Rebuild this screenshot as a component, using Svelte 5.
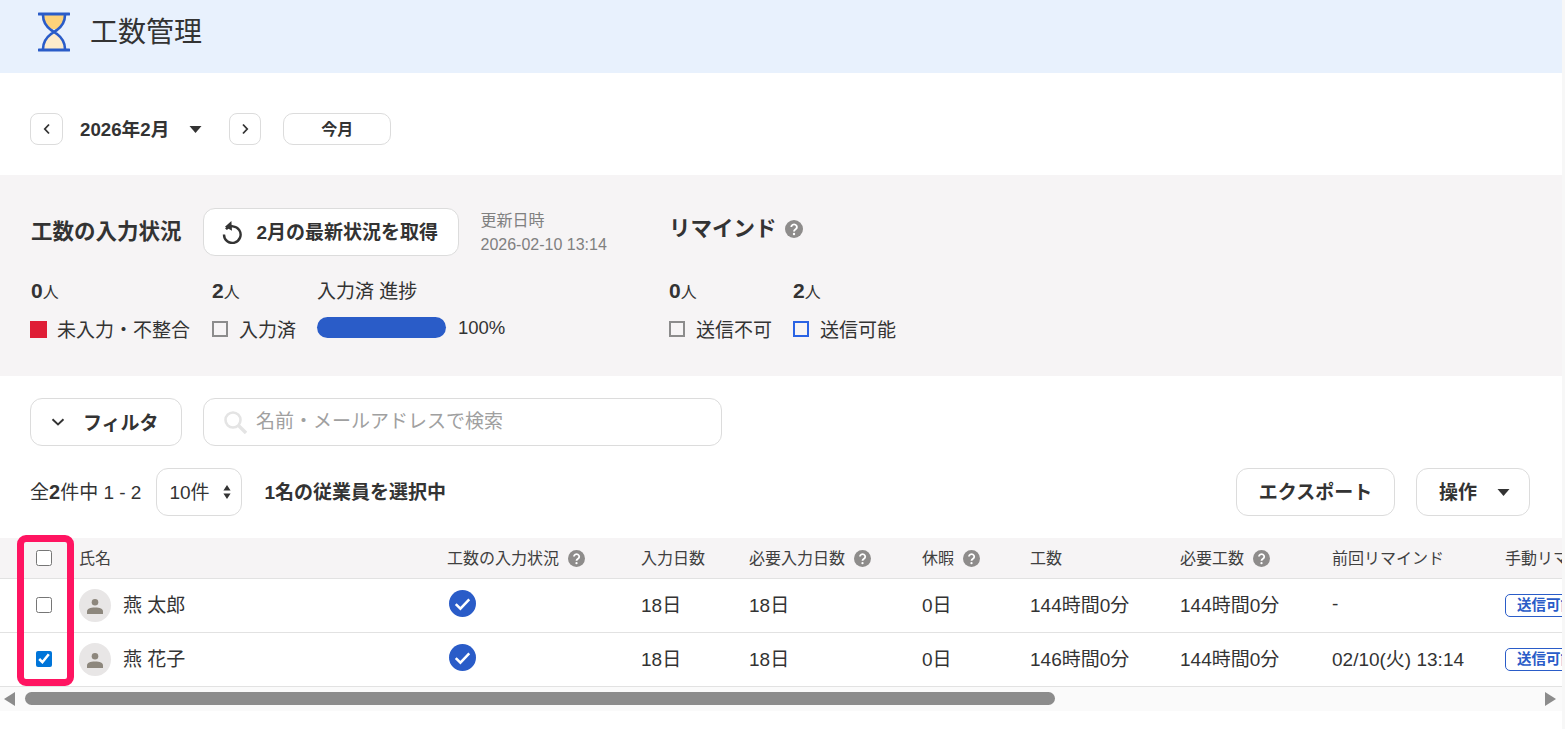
<script>
	const columns = [
		{ label: '工数の入力状況', help: true },
		{ label: '入力日数' },
		{ label: '必要入力日数', help: true },
		{ label: '休暇', help: true },
		{ label: '工数' },
		{ label: '必要工数', help: true },
		{ label: '前回リマインド' },
		{ label: '手動リマインド' }
	];

	const rows = [
		{ name: '燕 太郎', days: '18日', required: '18日', leave: '0日', hours: '144時間0分', requiredHours: '144時間0分', last: '-', checked: false },
		{ name: '燕 花子', days: '18日', required: '18日', leave: '0日', hours: '146時間0分', requiredHours: '144時間0分', last: '02/10(火) 13:14', checked: true }
	];
</script>

{#snippet help()}
	<svg class="help" viewBox="0 0 18 18" aria-hidden="true">
		<circle cx="9" cy="9" r="9" fill="#8e8c8b" />
		<path d="M6.3 7a2.8 2.6 0 1 1 4.3 2.2c-1 .7-1.6 1.1-1.6 2.2" fill="none" stroke="#fff" stroke-width="1.9" />
		<circle cx="9" cy="14" r="1.2" fill="#fff" />
	</svg>
{/snippet}

{#snippet caret()}
	<svg class="caret" viewBox="0 0 12 7" aria-hidden="true"><path d="M0 0h12L6 7z" fill="#333" /></svg>
{/snippet}

<div class="page">
	<header class="top">
		<svg class="logo" viewBox="0 0 32 40" aria-hidden="true">
			<path d="M5 3h22c0 7-3 11-8 14H13C8 14 5 10 5 3z" fill="#fdd27a" />
			<path d="M16 21c-5 3-10 8-10 16h20c0-8-5-13-10-16z" fill="#fdeccb" />
			<path d="M1 2h30M1 38h30" stroke="#2a5cc8" stroke-width="3" stroke-linecap="round" fill="none" />
			<path d="M5 3c0 8 4 12 8 15 2 1 4 3 6 4 4 3 8 7 8 15M27 3c0 8-4 12-8 15-2 1-4 3-6 4-4 3-8 7-8 15" stroke="#2a5cc8" stroke-width="2.6" fill="none" />
		</svg>
		<h1>工数管理</h1>
	</header>

	<div class="month">
		<button class="icon-btn" aria-label="前月">
			<svg viewBox="0 0 8 12"><path d="M6 1.5 1.8 6 6 10.5" fill="none" stroke="#333" stroke-width="1.8" /></svg>
		</button>
		<strong class="current">2026年2月</strong>
		{@render caret()}
		<button class="icon-btn next" aria-label="翌月">
			<svg viewBox="0 0 8 12"><path d="M2 1.5 6.2 6 2 10.5" fill="none" stroke="#333" stroke-width="1.8" /></svg>
		</button>
		<button class="today">今月</button>
	</div>

	<section class="status">
		<div class="left">
			<div class="title-row">
				<h2>工数の入力状況</h2>
				<button class="refresh">
					<svg viewBox="0 0 24 24" aria-hidden="true">
						<path d="M7 9.2A8.3 8.3 0 1 1 5 14.5" fill="none" stroke="#333" stroke-width="2.4" />
						<path d="M12.4 1 6 6.8l7 4z" fill="#333" />
					</svg>
					2月の最新状況を取得
				</button>
				<div class="updated">
					<div>更新日時</div>
					<div>2026-02-10 13:14</div>
				</div>
			</div>
			<div class="stats">
				<div class="stat s1">
					<div class="count"><b>0</b>人</div>
					<div class="legend"><i class="mark red"></i>未入力・不整合</div>
				</div>
				<div class="stat s2">
					<div class="count"><b>2</b>人</div>
					<div class="legend"><i class="mark grey"></i>入力済</div>
				</div>
				<div class="stat">
					<div class="count plain">入力済 進捗</div>
					<div class="legend">
						<span class="bar"></span>
						<span class="pct">100%</span>
					</div>
				</div>
			</div>
		</div>
		<div class="right">
			<div class="title-row">
				<h2>リマインド</h2>
				{@render help()}
			</div>
			<div class="stats">
				<div class="stat s3">
					<div class="count"><b>0</b>人</div>
					<div class="legend"><i class="mark grey"></i>送信不可</div>
				</div>
				<div class="stat">
					<div class="count"><b>2</b>人</div>
					<div class="legend"><i class="mark blue"></i>送信可能</div>
				</div>
			</div>
		</div>
	</section>

	<div class="filter-row">
		<button class="filter">
			<svg viewBox="0 0 14 8" aria-hidden="true"><path d="M1.5 1.2 7 6.4l5.5-5.2" fill="none" stroke="#333" stroke-width="1.9" /></svg>
			フィルタ
		</button>
		<label class="search">
			<svg viewBox="0 0 24 24" aria-hidden="true">
				<circle cx="10" cy="10" r="7.5" fill="none" stroke="#e4e4e4" stroke-width="2.6" />
				<path d="M15.5 15.5 23 23" stroke="#e4e4e4" stroke-width="3.4" />
			</svg>
			<input type="text" placeholder="名前・メールアドレスで検索" />
		</label>
	</div>

	<div class="list-row">
		<span class="total">全<b>2</b>件中 1 - 2</span>
		<div class="per-page">
			10件
			<svg viewBox="0 0 8 14" aria-hidden="true"><path d="M4 0l3.600 5.400H.4zM4 14 .4 8.600h7.200z" fill="#333" /></svg>
		</div>
		<strong class="selected">1名の従業員を選択中</strong>
		<button class="action export">エクスポート</button>
		<button class="action ops">操作 {@render caret()}</button>
	</div>

	<div class="table-area">
		<div class="highlight"></div>
		<div class="table-clip">
			<table>
				<colgroup>
					<col style="width: 79px" />
					<col style="width: 368px" />
					<col style="width: 194px" />
					<col style="width: 108px" />
					<col style="width: 173px" />
					<col style="width: 108px" />
					<col style="width: 150px" />
					<col style="width: 152px" />
					<col style="width: 173px" />
					<col style="width: 160px" />
				</colgroup>
				<thead>
					<tr>
						<th class="check"><input type="checkbox" /></th>
						<th>氏名</th>
						{#each columns as col}
							<th>
								<span class="th-inner">{col.label}{#if col.help}{@render help()}{/if}</span>
							</th>
						{/each}
					</tr>
				</thead>
				<tbody>
					{#each rows as row}
						<tr>
							<td class="check"><input type="checkbox" checked={row.checked} /></td>
							<td>
								<div class="person">
									<span class="avatar">
										<svg viewBox="0 0 16 16" aria-hidden="true">
											<circle cx="8" cy="4.3" r="3.3" fill="#8d877d" />
											<path d="M0 16v-2.4C0 10.500 3 9.500 8 9.500s8 1 8 4.100V16z" fill="#8d877d" />
										</svg>
									</span>
									<span class="cell-text">{row.name}</span>
								</div>
							</td>
							<td>
								<svg class="done" viewBox="0 0 26 26" aria-hidden="true">
									<circle cx="13" cy="13" r="13" fill="#2a5cc8" />
									<path d="M6.500 13.500 11 18l8.500-9" fill="none" stroke="#fff" stroke-width="2.400" />
								</svg>
							</td>
							<td><span class="cell-text">{row.days}</span></td>
							<td><span class="cell-text">{row.required}</span></td>
							<td><span class="cell-text">{row.leave}</span></td>
							<td><span class="cell-text">{row.hours}</span></td>
							<td><span class="cell-text">{row.requiredHours}</span></td>
							<td><span class="cell-text">{row.last}</span></td>
							<td><span class="badge">送信可能</span></td>
						</tr>
					{/each}
				</tbody>
			</table>
		</div>
		<div class="scrollbar">
			<svg class="arrow" viewBox="0 0 11 14" aria-hidden="true"><path d="M11 0v14L0 7z" fill="#8c8c8c" /></svg>
			<div class="track"><div class="thumb"></div></div>
			<svg class="arrow" viewBox="0 0 11 14" aria-hidden="true"><path d="M0 0v14l11-7z" fill="#8c8c8c" /></svg>
		</div>
	</div>
</div>

<style>
	:global(body) {
		margin: 0;
		background: #fff;
		overflow: hidden;
	}

	.page {
		width: 1562px;
		height: 729px;
		overflow: hidden;
		font-family: 'Liberation Sans', 'Noto Sans CJK JP', sans-serif;
		font-size: 16px;
		color: #333;
		border-right: 3px solid #f7f7f7;
	}

	button {
		font-family: inherit;
		color: #333;
		background: #fff;
		border: 1px solid #dcdcdc;
		padding: 0;
		cursor: pointer;
	}

	.top {
		display: flex;
		align-items: center;
		gap: 20px;
		height: 73px;
		padding: 0 0 10px 38px;
		box-sizing: border-box;
		background: #e8f1fd;
	}

	.logo {
		width: 32px;
		height: 40px;
	}

	h1 {
		margin: 0 0 4px;
		font-size: 28px;
		font-weight: 400;
	}

	.month {
		display: flex;
		align-items: center;
		height: 102px;
		padding: 10px 0 0 30px;
		box-sizing: border-box;
	}

	.icon-btn {
		display: flex;
		align-items: center;
		justify-content: center;
		width: 33px;
		height: 32px;
		border-radius: 8px;
	}

	.icon-btn svg {
		width: 8px;
		height: 12px;
	}

	.icon-btn.next {
		margin-left: 27px;
		width: 32px;
	}

	.current {
		margin: 0 20px 4px 17px;
		font-size: 18.7px;
	}

	.caret {
		width: 13px;
		height: 7px;
	}

	.today {
		width: 108px;
		height: 32px;
		margin-left: 22px;
		padding-bottom: 3px;
		border-radius: 10px;
		font-size: 16px;
		font-weight: 700;
	}

	.status {
		display: flex;
		height: 201px;
		padding: 33px 0 0 31px;
		box-sizing: border-box;
		background: #f6f4f5;
	}

	.left {
		width: 638px;
	}

	.title-row {
		display: flex;
		align-items: center;
		height: 48px;
	}

	.right .title-row {
		box-sizing: border-box;
		padding-bottom: 6px;
	}

	h2 {
		margin: 0 0 5px;
		font-size: 21.5px;
		font-weight: 700;
	}

	.right h2 {
		margin-bottom: 6px;
	}

	.refresh {
		display: flex;
		align-items: center;
		gap: 14px;
		width: 256px;
		height: 48px;
		margin-left: 21px;
		padding: 0 0 3px 15px;
		border-radius: 12px;
		box-sizing: border-box;
		font-size: 19px;
		font-weight: 700;
		white-space: nowrap;
	}

	.refresh svg {
		width: 24px;
		height: 24px;
		margin-top: 3px;
	}

	.updated {
		margin-left: 22px;
		padding-top: 2px;
		font-size: 16px;
		line-height: 24px;
		color: #808080;
		white-space: nowrap;
	}

	.right :global(.help) {
		margin-left: 8px;
		width: 18px;
		height: 18px;
	}

	.stats {
		display: flex;
		margin-top: 21px;
	}

	.stat {
		display: flex;
		flex-direction: column;
	}

	.s1 {
		width: 181px;
	}

	.s2 {
		width: 105px;
	}

	.s3 {
		width: 124px;
	}

	.count {
		height: 28px;
		font-size: 16px;
		line-height: 28px;
	}

	.count b {
		font-size: 21px;
	}

	.count.plain {
		font-size: 19px;
		line-height: 30px;
	}

	.legend {
		display: flex;
		align-items: center;
		height: 32px;
		margin-top: 8px;
		padding-bottom: 2px;
		box-sizing: border-box;
		font-size: 19px;
		white-space: nowrap;
	}

	.mark {
		display: block;
		width: 16px;
		height: 16px;
		margin: 2px 11px 0 0;
		box-sizing: border-box;
		border: 2px solid #8c8c8c;
	}

	.mark.red {
		width: 17px;
		height: 17px;
		margin-left: -1px;
		margin-right: 10px;
		background: #df1e36;
		border-color: #df1e36;
	}

	.mark.blue {
		border-color: #2a63e4;
	}

	.bar {
		width: 129px;
		height: 21px;
		border-radius: 11px;
		background: #2a5cc8;
		margin-bottom: 1px;
	}

	.pct {
		margin-left: 12px;
		font-size: 18.500px;
	}

	.filter-row {
		display: flex;
		gap: 21px;
		padding: 22px 0 0 30px;
	}

	.filter {
		display: flex;
		align-items: center;
		gap: 18px;
		width: 152px;
		height: 48px;
		padding: 0 0 2px 20px;
		box-sizing: border-box;
		border-radius: 12px;
		font-size: 19px;
		font-weight: 700;
	}

	.filter svg {
		width: 14px;
		height: 8px;
		margin-top: 2px;
	}

	.search {
		display: flex;
		align-items: center;
		gap: 9px;
		width: 519px;
		height: 48px;
		padding-left: 19px;
		box-sizing: border-box;
		border: 1px solid #dcdcdc;
		border-radius: 12px;
	}

	.search svg {
		width: 24px;
		height: 24px;
	}

	.search input {
		flex: 1;
		border: 0;
		outline: 0;
		padding: 0;
		background: none;
		font-family: inherit;
		font-size: 19px;
	}

	.search input::placeholder {
		color: #a0a0a0;
	}

	.list-row {
		display: flex;
		align-items: center;
		height: 48px;
		margin-top: 22px;
		padding: 0 32px 0 30px;
		font-size: 19px;
	}

	.total {
		padding-bottom: 4px;
		white-space: nowrap;
	}

	.total b {
		font-size: 20px;
	}

	.per-page {
		display: flex;
		align-items: center;
		justify-content: space-between;
		width: 86px;
		height: 48px;
		margin-left: 15px;
		padding: 0 10px 4px 12px;
		box-sizing: border-box;
		border: 1px solid #dcdcdc;
		border-radius: 12px;
	}

	.per-page svg {
		width: 8px;
		height: 14px;
		margin-top: 4px;
	}

	.selected {
		margin-left: 22px;
		padding-bottom: 4px;
	}

	.action {
		height: 48px;
		padding-bottom: 4px;
		border-radius: 12px;
		font-size: 19px;
		font-weight: 700;
	}

	.export {
		width: 159px;
		margin-left: auto;
	}

	.ops {
		display: flex;
		align-items: center;
		gap: 20px;
		width: 114px;
		margin-left: 21px;
		padding-left: 22px;
		box-sizing: border-box;
	}

	.ops .caret {
		margin-top: 4px;
	}

	.table-area {
		position: relative;
		margin-top: 22px;
	}

	.highlight {
		position: absolute;
		top: -3px;
		left: 17px;
		width: 57px;
		height: 151px;
		box-sizing: border-box;
		border: 7px solid #ff1461;
		border-radius: 9px;
		z-index: 2;
	}

	.table-clip {
		overflow: hidden;
	}

	table {
		width: 1665px;
		table-layout: fixed;
		border-collapse: separate;
		border-spacing: 0;
	}

	th,
	td {
		padding: 0;
		text-align: left;
		white-space: nowrap;
		font-weight: 400;
		border-bottom: 1px solid #e2e2e2;
	}

	th {
		height: 41px;
		padding-bottom: 3px;
		box-sizing: border-box;
		font-size: 16px;
		background: #f6f4f5;
		color: #404040;
	}

	td {
		height: 53px;
		font-size: 19px;
	}

	.cell-text {
		display: block;
		padding-bottom: 4px;
	}

	.check {
		padding: 0 0 0 36px;
		box-sizing: border-box;
	}

	td.check {
		padding-bottom: 2px;
	}

	.check input {
		display: block;
		width: 16px;
		height: 16px;
		margin: 0;
		accent-color: #0075d9;
	}

	.th-inner {
		display: inline-flex;
		align-items: center;
		gap: 9px;
	}

	.help {
		width: 17px;
		height: 17px;
		flex: none;
	}

	.th-inner :global(.help) {
		margin-top: 3px;
	}

	.person {
		display: flex;
		align-items: center;
		gap: 12px;
	}

	.avatar {
		display: flex;
		align-items: center;
		justify-content: center;
		width: 32px;
		height: 33px;
		border-radius: 50%;
		background: #e8e6e6;
	}

	.avatar svg {
		width: 16px;
		height: 16px;
	}

	.done {
		display: block;
		width: 27px;
		height: 27px;
		margin: 0 0 5px 2px;
	}

	.badge {
		display: inline-block;
		padding: 0 11px;
		margin-bottom: 1px;
		border: 1px solid #2a5cc8;
		border-radius: 5px;
		font-size: 14.500px;
		line-height: 21px;
		font-weight: 700;
		color: #2a5cc8;
	}

	.scrollbar {
		display: flex;
		align-items: center;
		gap: 10px;
		height: 24px;
		padding: 0 6px 1px 4px;
		box-sizing: border-box;
		background: #fafafa;
	}

	.arrow {
		width: 11px;
		height: 14px;
		flex: none;
	}

	.track {
		flex: 1;
	}

	.thumb {
		width: 1030px;
		height: 13px;
		border-radius: 7px;
		background: #8c8c8c;
	}
</style>
